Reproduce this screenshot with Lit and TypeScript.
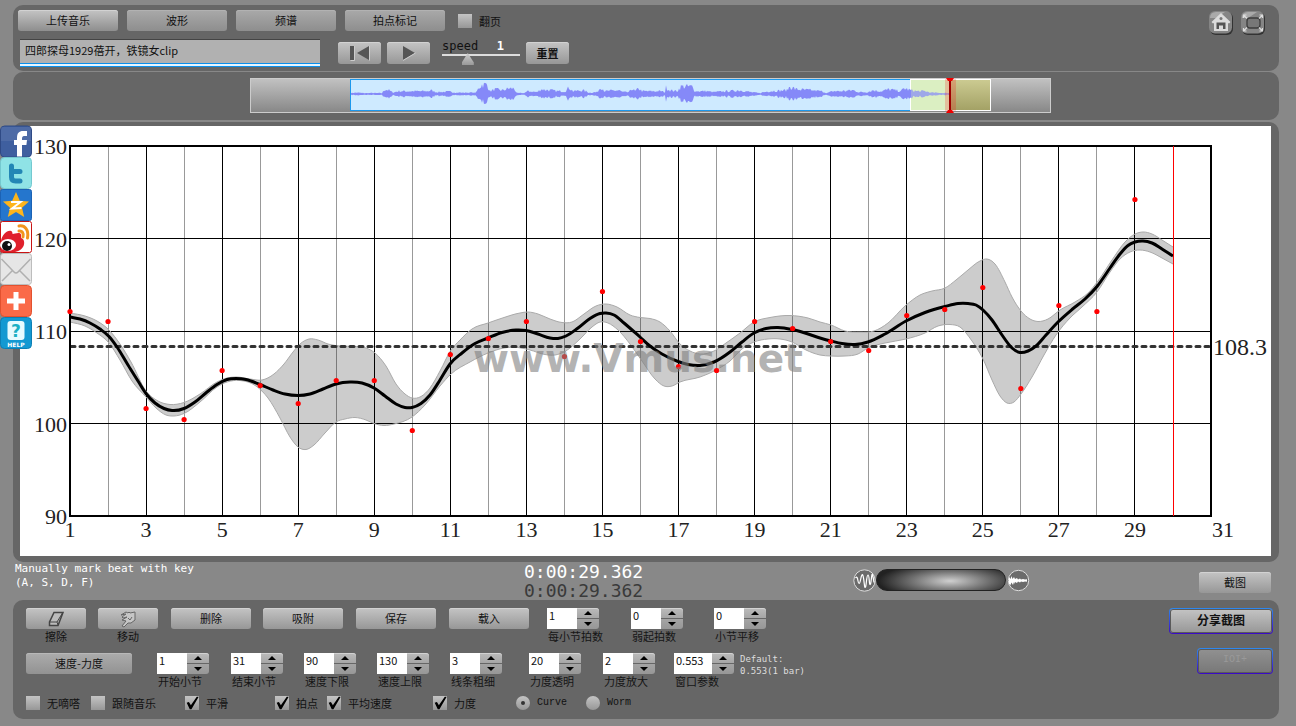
import { LitElement, html, svg, css } from "lit";
import { customElement, property } from "lit/decorators.js";

type Pt = [number, number];

/* ---- shared look of buttons and small text ---- */
const base = css`
  * { box-sizing: border-box; }
  button {
    font: inherit;
    color: #111;
    height: 21px;
    padding: 0 0 2px;
    border: 0;
    border-radius: 3px;
    background: linear-gradient(#c4c4c4, #979797);
    box-shadow: inset 0 1px 0 #d2d2d2;
    display: flex;
    align-items: center;
    justify-content: center;
  }
`;

/* ---- chart geometry, in the units of the chart's view box ---- */
const LEFT = 50, RIGHT = 1191, TOP = 20, BOTTOM = 390;
const STEP = (RIGHT - LEFT) / 30;
const beatX = (n: number) => LEFT + (n - 1) * STEP;

const pairs = (s: string): Pt[] =>
  s.trim().split(/\s+/).map((p) => {
    const [x, y] = p.split(",").map(Number);
    return [x - 20, y - 126] as Pt;
  });

/* Hermite curve whose slopes take the uneven spacing of the points into account */
const spline = (p: Pt[]) => {
  const sec = (i: number) => (p[i + 1][1] - p[i][1]) / (p[i + 1][0] - p[i][0]);
  const slope = p.map((_, i) => {
    if (i === 0) return sec(0);
    if (i === p.length - 1) return sec(i - 1);
    const h0 = p[i][0] - p[i - 1][0], h1 = p[i + 1][0] - p[i][0];
    return (sec(i - 1) * h1 + sec(i) * h0) / (h0 + h1);
  });
  let d = "";
  for (let i = 0; i < p.length - 1; i++) {
    const [x0, y0] = p[i], [x1, y1] = p[i + 1], h = (x1 - x0) / 3;
    d += `C${(x0 + h).toFixed(1)} ${(y0 + slope[i] * h).toFixed(1)} ` +
      `${(x1 - h).toFixed(1)} ${(y1 - slope[i + 1] * h).toFixed(1)} ${x1} ${y1}`;
  }
  return d;
};

const TEMPO = pairs(`70,317 80,319 90,323 100,329 109,336.5 117,347 128,365 138,381 146,393.5 155,403 164,408.5 172,410.5
184,408.5 195,402 207,392 217,384.5 227,379.5 236,378.5 246,379.5 260,384.5 273,390 285,394 298,395.5 310,394 323,389 336,384
350,382 362,383 374,388 385,396 396,404 405,407.5 412,407.5 421,403.5 430,395 440,380 450,364 462,353 475,343.5 488,338
502,332.5 516,330 526,330.5 538,334 550,338 558,338.5 566,336 578,328 590,318.5 600,313.5 606,313 614,315 624,323 640,337
650,346 662,354 678,361.5 688,364.5 700,365.5 714,362 730,352 742,342 754,333 766,328.5 778,327.5 792,329.5 805,333 820,338
831,341 842,343.5 855,344.5 868,342 885,334 906,321 925,312.5 945,306.5 958,303.5 968,303.5 976,305 983,310 992,320 1002,335
1012,348 1020,352.5 1028,351 1036,346 1046,335 1058,322 1072,309.5 1085,299 1097,286.5 1110,268 1120,254 1128,245.5 1135,242
1143,241 1152,243 1162,249 1173,256`);

const UPPER = pairs(`70,313 85,316 97,321 109,330 120,344 131,362 146,391 158,401 170,404.5 184,402.5 200,394 217,382 227,378
236,377 250,379 262,380 274,374 284,364 293,352 300,344 309,339 318,340 328,344 340,346 355,346.5 366,348 375,353 386,366
396,384 405,394 412,398 421,396.5 430,388 440,371 451,350 460,340 472,329 488,323 504,317.5 520,313 528,312 538,314 550,319
562,322.5 572,322 584,314 596,306 606,304 617,307 630,315 640,317.5 650,318.5 660,322 670,331 680,344 690,351 700,354 714,351
726,343 740,333 754,322 770,317.5 790,315.5 808,318 820,322 831,325 845,331 860,332 874,331 888,323 905,306 920,295 932,291
945,288 956,280 968,270 980,261 987,259 995,264 1005,282 1012,297 1021,311 1030,319 1038,321.5 1048,319 1060,310 1075,302
1088,293 1098,281 1112,260 1125,242 1135,234 1143,232 1152,234 1162,240 1173,247`);

const LOWER = pairs(`70,322 85,326 97,333 109,343 120,360 132,381 146,397 156,408 166,415 174,416 184,413.5 200,402 217,387
227,382 240,380.5 256,386 268,398 280,418 290,437 298,447 306,449.5 314,445 325,433 336,422 345,419 355,417.5 366,420 374,423.5
384,425.5 394,424 412,417 425,405 440,386 451,374 470,362 488,353 504,348 518,347.5 530,350 545,354.5 555,355 564,352 580,339
592,327 600,322 608,323 618,330 630,344 642,361 655,379 664,386 672,386 680,382 700,377 716,370 730,361 742,349 754,342 768,339
780,339 792,342 806,350 820,355 831,356 845,356 858,354 868,348 885,343 906,339 925,333 938,326 950,324.5 960,327 972,341
983,359 992,380 1000,396 1007,403 1014,402 1021,394 1032,377 1044,355 1056,335 1070,318 1082,307 1097,292 1110,272 1120,259
1130,252 1140,250 1150,252 1162,258 1173,264`);

const BEATS = [311, 321, 408, 419, 370, 385, 403, 380, 380, 430, 354, 338, 321, 356, 291, 341, 366, 370, 321, 328, 341, 350,
  315, 309, 287, 388, 305, 311, 199];

/* the beat under the play cursor */
const CURSOR = 30;

@customElement("tempo-chart")
class TempoChart extends LitElement {
  static styles = css`
    :host { display: block; background: #fff; }
    svg { display: block; width: 100%; height: auto; }
    .thin { stroke: #999; stroke-width: 1; }
    .line { stroke: #000; stroke-width: 1; }
    .frame { fill: none; stroke: #000; stroke-width: 2; }
    .axis { font: 22px "Liberation Serif", serif; fill: #222; }
    .avg { font-size: 24px; }
    .end { text-anchor: end; }
    .mid { text-anchor: middle; }
    .band { fill: #000; fill-opacity: 0.2; stroke: none; }
    .edge { fill: none; stroke: #aaa; stroke-width: 1; }
    .curve { fill: none; stroke: #000; stroke-width: 3; }
    .mean { stroke: #333; stroke-width: 3; stroke-dasharray: 4 5; stroke-linecap: round; }
    .dot { fill: #f00; }
    .cursor { stroke: #f00; stroke-width: 1; }
    .mark { font: bold 39px "DejaVu Sans", sans-serif; fill: #808080; fill-opacity: 0.6; }
  `;

  render() {
    const beats = Array.from({ length: 31 }, (_, i) => i + 1);
    const top = spline(UPPER);
    const low = [...LOWER].reverse();
    const y = [130, 120, 110, 100, 90];
    return html`
      <svg viewBox="0 0 1251 430" role="img" aria-label="Tempo chart">
        ${beats.filter((n) => n !== CURSOR).map((n) => {
          const x = Math.floor(beatX(n)) + 0.5;
          return svg`<line class=${n % 2 ? "line" : "thin"} x1=${x} x2=${x} y1=${TOP} y2=${BOTTOM} />`;
        })}
        ${[112.5, 205.5, 297.5].map((v) => svg`<line class="line" x1=${LEFT} x2=${RIGHT} y1=${v} y2=${v} />`)}
        <path class="band" d="M${UPPER[0].join(" ")}${top}L${low[0].join(" ")}${spline(low)}Z" />
        <path class="edge" d="M${UPPER[0].join(" ")}${top}" />
        <path class="edge" d="M${low[0].join(" ")}${spline(low)}" />
        <line class="mean" x1="51" x2="1194" y1="220.500" y2="220.500" />
        <path class="curve" d="M${TEMPO[0].join(" ")}${spline(TEMPO)}" />
        <rect class="frame" x=${LEFT} y=${TOP} width=${RIGHT - LEFT} height=${BOTTOM - TOP} />
        ${BEATS.map((v, i) => svg`<circle class="dot" cx=${beatX(i + 1)} cy=${v - 125.500} r="2.6" />`)}
        <line class="cursor" x1="1153.500" x2="1153.500" y1=${TOP} y2=${BOTTOM} />
        ${y.map((v, i) => svg`<text class="axis end" x="47" y=${28 + i * 92.5}>${v}</text>`)}
        ${beats.filter((n) => n % 2).map((n) =>
          svg`<text class="axis mid" x=${n === 31 ? RIGHT + 12 : beatX(n)} y="411">${n}</text>`)}
        <text class="axis avg" x="1193" y="229">108.3</text>
        <text class="mark" x="453" y="246">www.Vmus.net</text>
      </svg>`;
  }
}

/* loudness profile: offset from the selection start, half height */
const PROFILE: Pt[] = [[0, 1], [6, 1.5], [12, 1], [31, 1], [34, 5], [38, 4], [42, 1.5], [47, 3], [64, 3], [77, 3], [80, 4],
  [85, 2], [98, 2.5], [106, 1.5], [125, 1.5], [128, 7], [131, 10], [136, 10], [139, 3], [144, 5], [152, 4], [158, 6],
  [163, 6], [166, 1], [173, 1], [177, 3], [186, 2], [190, 5], [200, 4], [206, 3], [214, 3], [218, 7], [222, 3], [232, 4],
  [238, 1.5], [246, 2], [250, 8], [254, 3], [268, 4], [272, 2], [278, 2], [281, 6], [284, 3], [288, 6], [291, 3], [310, 3],
  [314, 2], [315, 7], [319, 4], [326, 3], [330, 8], [341, 8], [344, 3], [356, 3], [362, 2], [376, 3], [390, 4], [400, 2],
  [408, 1], [418, 3], [436, 4], [439, 8], [445, 5], [460, 4], [470, 3], [476, 1], [482, 3], [490, 3], [502, 4], [508, 2],
  [516, 2], [522, 4], [530, 3], [538, 5], [544, 4], [550, 3], [553, 6], [560, 4], [566, 3], [574, 3], [580, 1.5], [600, 1]];

const wavePath = () => {
  const up: string[] = [], down: string[] = [];
  let seed = 7, k = 0;
  for (let x = 0; x < 600; x++) {
    while (k < PROFILE.length - 2 && PROFILE[k + 1][0] < x) k++;
    const [x0, a0] = PROFILE[k], [x1, a1] = PROFILE[k + 1];
    const amp = a0 + ((a1 - a0) * (x - x0)) / (x1 - x0);
    seed = (seed * 16807) % 2147483647;
    const r = 0.55 + (seed / 2147483647) * 0.75;
    const h = Math.max(0.7, amp * r);
    up.push(`${x + 101} ${(16 - h).toFixed(1)}`);
    down.unshift(`${x + 101} ${(16 + h * 0.9).toFixed(1)}`);
  }
  return `M${up.join("L")}L${down.join("L")}Z`;
};

@customElement("wave-strip")
class WaveStrip extends LitElement {
  static styles = css`
    :host { display: block; width: 801px; max-width: 100%; }
    svg { display: block; width: 100%; height: auto; }
  `;
  render() {
    return html`
      <svg viewBox="0 0 801 35" role="img" aria-label="Waveform overview">
        <defs>
          <linearGradient id="g" x2="0" y2="1"><stop stop-color="#c2c2c2" /><stop offset="1" stop-color="#878787" /></linearGradient>
          <linearGradient id="k" x2="0" y2="1"><stop stop-color="#cccb92" /><stop offset="1" stop-color="#a3a165" /></linearGradient>
        </defs>
        <rect x=".5" y=".5" width="800" height="34" fill="url(#g)" stroke="#ccc" />
        <rect x="100.500" y="1.500" width="560" height="31" fill="#ceeaff" stroke="#1d98ec" />
        <rect x="660.500" y="1.500" width="42" height="31" fill="#dbefc2" stroke="#fff" />
        <rect x="700.500" y="1.500" width="40" height="31" fill="url(#k)" stroke="#fff" />
        <path d=${wavePath()} fill="#8589f8" />
        <rect x="661" y="2" width="38" height="30" fill="#dbefc2" fill-opacity=".3" />
        <rect x="695" y="1" width="11" height="32" fill="#f00" fill-opacity=".2" />
        <rect x="699" y="1" width="2" height="33" fill="#a00000" />
        <path d="M696 0h8l-2 3h-4zM696 35h8l-2-3h-4z" fill="#f00000" />
      </svg>`;
  }
}

@customElement("num-stepper")
class NumStepper extends LitElement {
  @property() label = "";
  @property() value = "";
  @property({ type: Boolean }) wide = false;
  static styles = [base, css`
    :host { display: block; white-space: nowrap; }
    .box { display: flex; height: 21px; }
    input {
      width: 30px; height: 21px; border: 0; padding: 0 0 7px 2px; margin: 0; background: #fff; color: #111;
      font: inherit; border-radius: 0;
    }
    .wide { width: 38px; }
    .keys { display: grid; grid-template-rows: 10px 10px; gap: 1px; width: 22px; }
    button { height: 10px; width: 22px; padding: 0; border-radius: 0 3px 0 0; background: linear-gradient(#bbb, #a6a6a6); }
    .down { border-radius: 0 0 3px 0; background: linear-gradient(#a4a4a4, #979797); box-shadow: none; }
    label { display: block; line-height: 14px; color: #151515; padding-left: 1px; }
  `];
  render() {
    return html`
      <div class="box">
        <input id="f" type="text" class=${this.wide ? "wide" : ""} .value=${this.value} />
        <div class="keys">
          <button aria-label="Increase"><svg width="8" height="4"><path d="M0 4L4 0L8 4Z" /></svg></button>
          <button class="down" aria-label="Decrease"><svg width="8" height="4"><path d="M0 0H8L4 4Z" /></svg></button>
        </div>
      </div>
      <label for="f">${this.label}</label>`;
  }
}

const socialIcon = (n: number) => html`<svg class="social-icon" viewBox="0 0 32 32" aria-hidden="true">${[
  svg`<rect x=".5" y="1" width="31" height="31" rx="4" fill="#3f5f9f" stroke="#2f4a85" /><path d="M1 2h30v14H1z" fill="#fff" opacity=".08" />
      <path d="M17 31.500V20h-3v-5h3v-2c0-5 2-7 6-7h4v5h-2c-2 0-3 .6-3 2.500V15h5l-.6 5H22v11.500z" fill="#fff" />`,
  svg`<rect x=".5" y=".5" width="31" height="31" rx="4" fill="#8fe3e6" stroke="#74c9d0" />
      <path d="M11.500 9v11c0 3 1.500 4 4 4h4.500M11.500 14.500h8.500" fill="none" stroke="#2386b5" stroke-width="5" stroke-linecap="round" />`,
  svg`<rect x=".5" y=".5" width="31" height="31" rx="2" fill="#2576cd" stroke="#1b62b5" />
      <path d="M16 3l3.800 8.800 9.200.8-7 6.200 2.200 9.200L16 23l-8.200 5L10 18.800 3 12.600l9.200-.8z" fill="#fdb51c" />
      <path d="M11 13h9.500l-8.500 6.500 9.500-.5" fill="none" stroke="#fff" stroke-width="2" />`,
  svg`<rect x=".5" y=".5" width="31" height="31" rx="2" fill="#fff" stroke="#c81414" />
      <path d="M1 20C2 14 7 9 11 10c2 .5 1 3 2 3s7-2.500 8 .5c.6 2-1 3 1 4 4 2 3 12-7 13.500H1z" fill="#e0202c" />
      <ellipse cx="8" cy="24" rx="8" ry="6" fill="#fff" /><circle cx="7" cy="25" r="5" fill="#111" /><circle cx="9" cy="23.500" r="1.500" fill="#fff" />
      <path d="M19 5c6-1 10 4 8.500 12M19 10c3-.5 5 2 4 6" fill="none" stroke="#f2941e" stroke-width="3" stroke-linecap="round" />`,
  svg`<rect x=".5" y=".5" width="31" height="31" rx="3" fill="#e6e6e6" stroke="#bdbdbd" />
      <path d="M2 28l11-11M30 28L19 17M1.500 6L14 19q2 2 4 0L30.500 6" fill="none" stroke="#b0b0b0" stroke-width="1.500" />`,
  svg`<rect x=".5" y=".5" width="31" height="31" rx="4" fill="#fa6a48" stroke="#e2512f" /><path d="M16 7v18M7 16h18" stroke="#fff" stroke-width="5" />`,
  svg`<rect x=".5" y=".5" width="31" height="31" rx="4" fill="#1499d2" stroke="#0d7fb4" /><rect x="7.500" y="4" width="17" height="19" rx="3" fill="#e8fbff" />
      <text x="16" y="20" font-family="DejaVu Sans, sans-serif" font-weight="bold" font-size="17" text-anchor="middle" fill="#1cb0c4">?</text>
      <text x="16" y="29.500" font-family="DejaVu Sans, sans-serif" font-weight="bold" font-size="6" text-anchor="middle" fill="#fff">HELP</text>`,
][n]}</svg>`;

const SHARES = ["Facebook", "Twitter", "Qzone", "Weibo", "Mail", "More", "Help"];

@customElement("app-root")
class AppRoot extends LitElement {
  static styles = [base, css`
    :host {
      display: flex; flex-direction: column; position: relative; min-height: 100vh; padding: 5px 17px 7px 13px;
      box-sizing: border-box; background: #888; color: #111;
      font: 11px/14px "Noto Sans CJK SC", sans-serif;
    }
    .panel { background: #666; border-radius: 10px; }
    .toolbar { display: flex; justify-content: space-between; padding: 5px 13px 3px 5px; margin-bottom: 1px; }
    .row { display: flex; align-items: center; }
    .tabs { gap: 9px; }
    .tabs button { width: 100px; background: linear-gradient(#a9a9a9, #8e8e8e); box-shadow: inset 0 1px 0 #b2b2b2; }
    .tabs .lead { background: linear-gradient(#c4c4c4, #8e8e8e); box-shadow: inset 0 1px 0 #d2d2d2; }
    .tabs .check { margin-left: 4px; }
    .title-row { padding: 8px 0 0 2px; height: 37px; align-items: flex-start; }
    .title {
      width: 300px; height: 28px; border: 0; border-top: 1px solid #444; border-radius: 0; background: #b1b1b1; color: #111;
      font: inherit; padding: 0 5px 8px; margin-right: 18px; box-shadow: inset 0 -1px 0 #0b90ec, inset 0 -3px 0 #e8f6ff, inset 0 -4px 0 #0b90ec;
    }
    .play { width: 43px; height: 22px; padding: 0; margin: 3px 6px 0 0; }
    .play:last-child { margin: 3px 0 0; font-weight: bold; }
    .speed { width: 78px; margin: 0 6px; font: 12px/14px "DejaVu Sans Mono", monospace; }
    .speed .row { justify-content: space-between; padding-right: 16px; }
    .speed output { color: #fff; font-weight: bold; }
    .speed input { appearance: none; display: block; width: 78px; height: 12px; margin: 0; background: linear-gradient(#ddd, #ddd) 0 1px / 100% 2px no-repeat; }
    .speed input::-webkit-slider-thumb { appearance: none; width: 12px; height: 12px; background: linear-gradient(#d0d0d0, #999); clip-path: polygon(50% 0, 100% 80%, 100% 100%, 0 100%, 0 80%); }
    .tools { display: flex; gap: 6px; }
    .tools a, .tools svg { display: block; width: 26px; height: 26px; }
    .strip { padding: 6px 0 7px 8px; display: flex; justify-content: center; margin-bottom: 2px; }
    .chart { padding: 4px 8px 6px 7px; }
    .status { display: grid; grid-template-columns: 509fr 329fr 346fr 72px; height: 38px; padding: 0 8px 0 2px; }
    .hint { margin: 0; color: #fff; font: 11px/14px "DejaVu Sans Mono", monospace; }
    .clock { font: 18px/19px "DejaVu Sans Mono", monospace; color: #fff; }
    .clock .dim { color: #3a3a3a; }
    .blend { display: flex; align-items: flex-start; padding-top: 7px; }
    .blend svg { display: block; width: 23px; height: 23px; }
    .blend input { appearance: none; width: 130px; height: 22px; margin: 0 1px 0 0; border-radius: 11px; border: 1px solid #222; background: radial-gradient(ellipse 56% 90% at 57% 55%, #d0d0d0, #777 50%, #222); }
    .blend input::-webkit-slider-thumb { appearance: none; width: 1px; height: 1px; }
    .status button { margin-top: 10px; }
    .controls { display: flex; justify-content: space-between; padding: 8px 6px 8px 13px; min-height: 119px; }
    .grid { display: grid; align-items: start; }
    .first { grid-template-columns: 72px 73px 92px 93px 93px 98px 84px 83px auto; height: 45px; }
    .second { grid-template-columns: 131px 74px 73px 73px 73px 79px 74px 71px 66px auto; height: 42px; }
    .third { grid-template-columns: 65px 94px 90px 52px 106px 83px 70px auto; align-items: center; }
    .cell { display: flex; flex-direction: column; width: 60px; align-items: center; }
    .cell button { width: 60px; padding: 0; }
    .cell label { line-height: 14px; }
    .cap { width: 80px; }
    .mode { width: 106px; background: linear-gradient(#acacac, #929292); box-shadow: inset 0 1px 0 #b8b8b8; }
    .default { margin: 0; color: #ddd; font: 9px/12px "DejaVu Sans Mono", monospace; white-space: nowrap; }
    .check { display: flex; align-items: center; gap: 7px; height: 16px; line-height: 14px; white-space: nowrap; }
    .check input { appearance: none; width: 14px; height: 14px; margin: 0; background: linear-gradient(#c4c4c4, #979797); }
    .check input:checked[type="checkbox"]::after {
      content: ""; display: block; width: 14px; height: 14px; background: #000;
      clip-path: polygon(12% 48%, 28% 42%, 42% 66%, 84% 6%, 98% 6%, 46% 94%, 34% 94%);
    }
    .check input[type="radio"] { border-radius: 50%; }
    .check input:checked[type="radio"]::after { content: ""; display: block; width: 4px; height: 4px; margin: 5px; border-radius: 2px; background: #333; }
    .latin { font: 10px/14px "Liberation Mono", monospace; }
    .side { display: flex; flex-direction: column; gap: 14px; align-items: flex-end; }
    .ring {
      height: 26px; border: 1px solid transparent; border-radius: 4px; box-shadow: inset 0 0 0 1px #5a5a5a;
      background: linear-gradient(#c4c4c4, #979797) padding-box, linear-gradient(#2d8af0, #3a08c8) border-box;
    }
    .share { width: 104px; font-weight: bold; font-size: 12px; }
    .ioi { width: 76px; background: linear-gradient(#919191, #787878) padding-box, linear-gradient(#2d8af0, #3a08c8) border-box; color: #999; }
    .social { position: absolute; left: 0; top: 125px; display: flex; flex-direction: column; }
    .social a, .social-icon { display: block; width: 32px; height: 32px; }
  `];

  private check(text: string, on = false) {
    return html`<label class="check"><input type="checkbox" ?checked=${on} />${text}</label>`;
  }

  render() {
    return html`
      <header class="panel toolbar">
        <div>
          <div class="row tabs">
            <button class="lead">上传音乐</button><button>波形</button><button>频谱</button><button>拍点标记</button>
            ${this.check("翻页")}
          </div>
          <div class="row title-row">
            <input class="title" type="text" aria-label="Title" .value=${"四郎探母1929蓓开，铁镜女clip"} />
            <button class="play" aria-label="Back to start">
              <svg width="22" height="16" fill="#555"><path d="M1 1h4v14H1z" /><path d="M20 1v14L8 8z" /><path d="M1.500 15.500h4V1M20.500 1v14.500" fill="none" stroke="#ccc" /></svg>
            </button>
            <button class="play" aria-label="Play">
              <svg width="16" height="16"><path d="M2 1v14l12-7z" fill="#555" /><path d="M2 15.500L14.500 8" fill="none" stroke="#ccc" /></svg>
            </button>
            <div class="speed">
              <div class="row"><label for="speed">speed</label><output>1</output></div>
              <input id="speed" type="range" min="0" max="3" step="0.1" value="0.9" />
            </div>
            <button class="play">重置</button>
          </div>
        </div>
        <nav class="tools">
          <a href="#" aria-label="Home"><svg viewBox="0 0 26 26">
            <rect x="2" y="2" width="23" height="23" rx="6" fill="#333" /><rect x="1" y="1" width="23" height="22.500" rx="6" fill="#858585" />
            <path d="M2 8q0-6 6-6h9l-9 6z" fill="#aaa" />
            <path d="M13 3L3.500 12l1.500 1.500L6 13v8h14v-8l1 .5 1.500-1.500z" fill="#dcdcdc" /><path d="M8.500 19v-6.500h9V19H15v-3.500h-4V19z" fill="#555" /><circle cx="13" cy="8.500" r="1.500" fill="#777" />
          </svg></a>
          <a href="#" aria-label="Full screen"><svg viewBox="0 0 26 26">
            <rect x="2" y="2" width="23" height="23" rx="6" fill="#333" /><rect x="1" y="1" width="23" height="22.500" rx="6" fill="#858585" />
            <path d="M2 8q0-6 6-6h9l-9 6z" fill="#aaa" />
            <rect x="7" y="8" width="13" height="10" rx="3" fill="#777" stroke="#3c3c3c" stroke-width="1.300" />
            <path d="M3.500 8V5h3M19.500 5h3v3M22.500 18v3h-3M6.500 21h-3v-3M4 5.500l3 3M22 5.500l-3 3M22 20.500l-3-3M4 20.500l3-3" fill="none" stroke="#ddd" stroke-width="1.200" />
          </svg></a>
        </nav>
      </header>

      <section class="panel strip"><wave-strip></wave-strip></section>
      <main class="panel chart"><tempo-chart></tempo-chart></main>

      <section class="status">
        <p class="hint">Manually mark beat with key<br />(A, S, D, F)</p>
        <div class="clock"><div>0:00:29.362</div><div class="dim">0:00:29.362</div></div>
        <div class="blend">
          <svg viewBox="0 0 23 23" aria-hidden="true"><circle cx="11.500" cy="11.500" r="10.700" fill="#6b6b6b" stroke="#ddd" />
            <path d="M2.500 9c1.500-2 2 0 2.500 3s1.500 4 2.500-1 2-8 3-2 1 11 2 9 1-12 2.500-12 1 9 2 9.500S18.500 7 19 5.500s1.500 5 2 8" fill="none" stroke="#fff" stroke-width="1.200" /></svg>
          <input type="range" aria-label="Blend" />
          <svg viewBox="0 0 23 23" aria-hidden="true"><circle cx="11.500" cy="11.500" r="10.200" fill="#6b6b6b" stroke="#ddd" />
            <path d="M2 8l1.500 2 1-3 1 3 1.500-2 1 2 2-1 1 1.500 2-1 1 1 2-.5 2 .5 2-.3v2.600l-2-.3-2 .5-2-.5-1 1-2-1-1 1.500-2-1-1 2L7 13l-1 3-1.500-2.500-1 2.500L2 15z" fill="#fff" /></svg>
        </div>
        <button>截图</button>
      </section>

      <section class="panel controls">
        <div>
          <div class="grid first">
            <div class="cell"><button id="erase" aria-label="擦除">
              <svg width="18" height="16"><path d="M7 1.500h9L11 14.500H2.500V11z" fill="#bbb" stroke="#444" stroke-width="1.500" /><path d="M2.500 11H10l5.500-9M10 11l1 3" fill="none" stroke="#444" /></svg>
            </button><label for="erase">擦除</label></div>
            <div class="cell"><button id="move" aria-label="移动">
              <svg width="18" height="18" fill="#c6c6c6" stroke="#666"><path d="M2 5l5-3 2 1 1-1 1 1 5-1v8l-4 3h-3l-4 4-2-1 4-5-4-1 5-3-4 1-1-1 4-3z" /><path d="M9 8l2 2 2-3" fill="none" /></svg>
            </button><label for="move">移动</label></div>
            <button class="cap">删除</button><button class="cap">吸附</button><button class="cap">保存</button><button class="cap">载入</button>
            <num-stepper label="每小节拍数" value="1"></num-stepper>
            <num-stepper label="弱起拍数" value="0"></num-stepper>
            <num-stepper label="小节平移" value="0"></num-stepper>
          </div>
          <div class="grid second">
            <button class="mode">速度-力度</button>
            <num-stepper label="开始小节" value="1"></num-stepper>
            <num-stepper label="结束小节" value="31"></num-stepper>
            <num-stepper label="速度下限" value="90"></num-stepper>
            <num-stepper label="速度上限" value="130"></num-stepper>
            <num-stepper label="线条粗细" value="3"></num-stepper>
            <num-stepper label="力度透明" value="20"></num-stepper>
            <num-stepper label="力度放大" value="2"></num-stepper>
            <num-stepper wide label="窗口参数" value="0.553"></num-stepper>
            <p class="default">Default:<br />0.553(1 bar)</p>
          </div>
          <div class="grid third">
            ${this.check("无嘀嗒")}${this.check("跟随音乐")}${this.check("平滑", true)}${this.check("拍点", true)}
            ${this.check("平均速度", true)}${this.check("力度", true)}
            <label class="check latin"><input type="radio" name="style" checked />Curve</label>
            <label class="check latin"><input type="radio" name="style" />Worm</label>
          </div>
        </div>
        <div class="side">
          <button class="ring share">分享截图</button>
          <button class="ring ioi latin" disabled>IOI+</button>
        </div>
      </section>

      <nav class="social">
        ${SHARES.map((name, i) => html`<a href="#" aria-label=${name}>${socialIcon(i)}</a>`)}
      </nav>`;
  }
}
